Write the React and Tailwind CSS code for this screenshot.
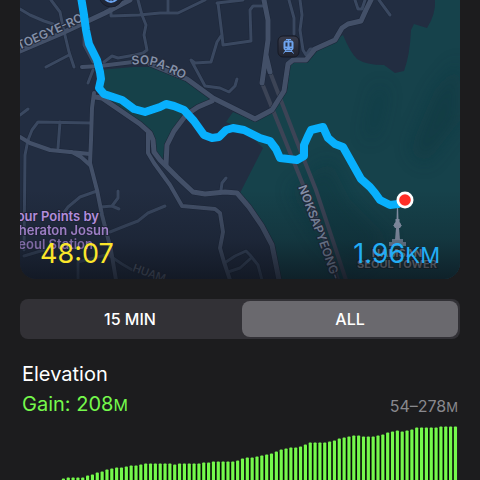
import React, { useState } from "react";

const roads = [
  { w: 3, d: "M20 9 L30 15 L44 21 L53 24" },
  { w: 3, d: "M51 0 L60 12 L63 27 L69 52 L74 67 M46 67 L69 55" },
  { w: 3, d: "M111 8 L111 16 L139 15 L160 13 L178 13 L205 0 M168 0 L168 13" },
  { w: 3, d: "M138 0 L142 15 L146 25 L144 35 L147 50 L143 53 L135 55 L118 58 L112 56 L104 62" },
  { w: 3, d: "M218 3 L222 35 L223 45 L251 41 L250 10 L253 6 L264 6 M217 3 L243 0" },
  { w: 3, d: "M221 36 L217 42 L211 62 L195 63 L191 60 L205 86 L220 88 L229 92 L235 86 L237 79" },
  { w: 3, d: "M289 0 L294 18 L294 34 M300 0 L302 15 L300 30 L303 50 L306 55 L310 49 L316 49" },
  { w: 3, d: "M355 0 L358 9 L362 9 L365 0 M379 0 L390 15" },
  { w: 3, d: "M20 115 L28 109 M60 122 L58 148 M28 140 L25 155 L24 250" },
  { w: 3, d: "M91 123 L38 122 L32 130 L28 140" },
  { w: 4, d: "M20 137 L30 143 L50 150 L90 154 M72 152 L81 157 L90 165" },
  { w: 3, d: "M60 218 L68 207 L80 197 L97 191 M101 207 L112 206 L118 198 L118 191 M112 206 L119 209" },
  { w: 3, d: "M78 280 L78 262 L110 254 M24 256 L44 250 M110 232 L125 226 L138 221 L148 213 L165 206" },
  { w: 3, d: "M110 256 L122 264 L134 271" },
  { w: 3, d: "M221 190 L222 183 L226 178 M226 262 L235 256 L246 251 L250 255 L258 265 L262 280 M228 272 L240 268 L250 259" },
  { w: 4, d: "M94 93 L92 108 L91 140 L90 163 L97 190 L102 215 L111 250 L116 280" },
  { w: 3, d: "M84 25 L84 45 L93 62 M88 83 L93 70" },
  { w: 5, d: "M20 51 L60 34 L105 13 L122 4 L130 0" },
  { w: 4, d: "M82 67 L100 66 L133 62" },
  { w: 4, d: "M148 133 L148 153 L154 163 L170 185 L182 206 L215 209 L220 213 L223 232 L220 248 L224 262 L230 280" },
  { w: 5, d: "M95 97 L102 98 L140 124 L150 133 L153 140 L154 152 L160 160 L177 177 L193 192 L205 194 L225 192 L237 193 L249 207 L262 226 L272 245 L279 280" },
  { w: 5, d: "M212 101 L198 107 L186 115 L174 131 L167 145 L166 165" },
  { w: 5, d: "M264 0 L268 20 L268 40 L262 83 M266 55 L270 72" },
  { w: 5, d: "M150 64 L187 79 L213 98 L255 119 L272 110 L284 91 L288 64 L293 60 L306 60 L315 49 L335 40 L342 28 L348 24 L361 21 L366 10 L371 0" },
];

const route =
  "M81 -3 L84 15 L86 30 L89 44 L97 60 L100 72 L101 79 L99 88 L104 94 L122 100 L134 109 L145 112 L160 107 L166 104 L174 106 L184 110 L194 121 L204 135 L212 138 L219 137 L226 130 L233 128 L244 130 L260 138 L270 141 L276 149 L280 158 L297 160 L304 156 L304 145 L308 136 L311 130 L323 127 L328 138 L335 144 L343 147 L352 163 L361 179 L370 187 L375 193 L380 200 L390 205 L398 204 L405 201";

// top of every elevation bar, in page units
const tops = [
  479, 478, 478, 478, 478, 476, 475, 473, 472, 470, 469, 468, 468, 467, 466, 466,
  465, 464, 464, 464, 464, 464, 464, 465, 464, 464, 464, 464, 464, 463, 463, 462,
  462, 462, 462, 462, 461, 459, 458, 458, 457, 456, 455, 454, 452, 450, 449, 448,
  448, 447, 445, 443, 443, 443, 443, 442, 441, 439, 438, 437, 436, 436, 437, 437,
  437, 436, 435, 433, 432, 431, 432, 431, 430, 428, 428, 428, 428, 428, 427, 427,
  427, 427,
];

function RouteMap() {
  return (
    <svg
      viewBox="20 0 440 279"
      className="block w-full"
      role="img"
      aria-label="Route map"
      fontFamily="Inter, sans-serif"
    >
      <defs>
        <linearGradient id="fade" x1="0" y1="0" x2="0" y2="1">
          <stop offset="0" stopColor="#0b0f17" stopOpacity="0" />
          <stop offset="0.55" stopColor="#0b0f17" stopOpacity="0.22" />
          <stop offset="1" stopColor="#0b0f17" stopOpacity="0.65" />
        </linearGradient>
        <linearGradient id="badge" x1="0" y1="0" x2="0" y2="1">
          <stop offset="0" stopColor="#383c4c" />
          <stop offset="1" stopColor="#20232f" />
        </linearGradient>
        <filter id="soft" x="-50%" y="-50%" width="200%" height="200%">
          <feGaussianBlur stdDeviation="9" />
        </filter>
        <path id="toegye" d="M19 50 L64 30 L94 16" />
        <path id="sopa" d="M132 65 Q150 62 162 69 L196 85" />
        <path id="noksa" d="M298 187 L316 234 Q324 256 336 292" />
        <path id="huam" d="M132 271 L168 284" />
      </defs>

      <rect x="20" width="440" height="279" fill="#222d41" />

      {/* parks */}
      <path
        fill="#164149"
        d="M99 70 L133 67 L152 67 L187 82 L210 99 L196 106 L184 114 L172 130 L165 148 L163 160 L155 150 L152 133 L134 118 L99 92Z"
      />
      <path
        fill="#16424b"
        d="M233 112 L255 121 L273 111 L287 91 L290 63 L306 62 L318 49 L343 35 Q350 52 357 59 Q366 65 384 65 L395 73 L404 71 Q410 55 411 30 L414 24 L427 28 Q436 14 435 0 L460 0 L460 279 L279 279 L272 245 L262 226 L240 193 L263 148 L245 130 L226 122Z"
      />
      <g fill="#10343d" filter="url(#soft)" opacity="0.4">
        <path d="M460 60 L435 90 L420 125 L410 150 L425 165 L460 120Z" />
        <path d="M378 85 L372 110 L366 140 L376 135 L386 90Z" />
        <path d="M290 190 L330 160 L350 200 L390 240 L350 270 L320 240Z" />
      </g>

      {/* tunnel */}
      <g fill="none" stroke="#3c4456" strokeWidth="4">
        <path d="M262 83 L287 145 L310 202 L325 240 L338 280" />
        <path d="M270 72 L297 142 L316 190 L346 280" />
      </g>

      <g fill="none" strokeLinecap="round" strokeLinejoin="round">
        {roads.map((r) => (
          <path key={r.d} d={r.d} stroke="#1d2739" strokeWidth={r.w + 1} />
        ))}
        {roads.map((r) => (
          <path
            key={r.d}
            d={r.d}
            stroke={r.w > 3 ? "#435068" : "#3a4860"}
            strokeWidth={r.w}
          />
        ))}
      </g>

      {/* street names */}
      <g
        fill="#8490a8"
        stroke="#222b3c"
        strokeWidth="2"
        paintOrder="stroke"
        fontWeight="600"
        fontSize="12"
      >
        <text>
          <textPath href="#toegye">TOEGYE-RO</textPath>
        </text>
        <text>
          <textPath href="#sopa">SOPA-RO</textPath>
        </text>
        <text>
          <textPath href="#noksa">NOKSAPYEONG-</textPath>
        </text>
        <text fontSize="11" fill="#5d6679" fontWeight="500">
          <textPath href="#huam">HUAM</textPath>
        </text>
      </g>

      {/* stations */}
      <circle cx="111" cy="-5" r="12" fill="#1f2637" stroke="#171d2b" />
      <path d="M104 -2 Q111 6 118 -2" fill="none" stroke="#6ba4f0" strokeWidth="2" />
      <path d="M107 0 V-4 M111 1 V-4 M115 0 V-4" stroke="#6ba4f0" strokeWidth="1" />
      <rect x="278" y="36" width="21" height="21" rx="5" fill="url(#badge)" stroke="#151924" />
      <g fill="none" stroke="#6fa5f0" strokeWidth="1">
        <path d="M286 39.500 H291 M288.500 39.500 V41" />
        <rect x="284" y="41" width="9" height="9" rx="1.500" fill="#6fa5f0" />
        <path d="M286 50 L283.500 53.500 M291 50 L293.500 53.500 M285 51.500 H292" />
        <path d="M286.500 42.500 V46.500 M290.500 42.500 V46.500" stroke="#29334b" strokeWidth="2" />
        <path d="M285.500 48.500 H286.500 M290.500 48.500 H291.500" stroke="#29334b" />
      </g>

      {/* seoul tower */}
      <g fill="#8f9bb1">
        <path d="M397 205 L396.500 220 H398.500 L398 205Z" />
        <path d="M395.500 219 H399.500 V222 L401 224 V226 H394 V224 L395.500 222Z" />
        <path d="M393 225 H402 L400 228 H395Z" />
        <path d="M396 228 H399 L400 240 H395Z" />
        <path d="M392 239 H403 V242 H406 V246 H389 V242 H392Z" opacity="0.8" />
      </g>
      <g
        fill="#8a8f98"
        stroke="#1a2d36"
        strokeWidth="2"
        paintOrder="stroke"
        fontSize="11"
        fontWeight="700"
        textAnchor="middle"
      >
        <text x="397" y="257">NAMSAN</text>
        <text x="397" y="268">SEOUL TOWER</text>
      </g>

      <rect x="20" y="190" width="440" height="89" fill="url(#fade)" />

      <g
        fill="#b28ddb"
        stroke="#1c2233"
        strokeWidth="2"
        paintOrder="stroke"
        fontSize="13"
        fontWeight="600"
      >
        <text x="99" y="221" textAnchor="end">Four Points by</text>
        <text x="109" y="235" textAnchor="end" opacity="0.85">Sheraton Josun</text>
        <text x="93" y="249" textAnchor="end" opacity="0.65">Seoul Station</text>
      </g>

      <path
        d={route}
        fill="none"
        stroke="#08b0fd"
        strokeWidth="8"
        strokeLinecap="round"
        strokeLinejoin="round"
      />
      <circle cx="405" cy="200" r="8.500" fill="#fff" />
      <circle cx="405" cy="200" r="5.800" fill="#ff2d26" />
    </svg>
  );
}

function ElevationChart() {
  const step = 4.84;
  return (
    <svg
      viewBox="20 419 440 61"
      className="block w-full"
      role="img"
      aria-label="Elevation chart"
    >
      <path
        fill="#070d08"
        d={
          tops
            .map((t, i) => `${i ? "L" : "M"}${63.4 + i * step} ${t + 1}`)
            .join(" ") + " L455 480 L63 480Z"
        }
      />
      {tops.map((t, i) => (
        <rect
          key={i}
          x={61.8 + i * step}
          y={t - 0.5}
          width="3.2"
          height={482 - t}
          rx="1"
          fill="#75f94c"
        />
      ))}
    </svg>
  );
}

export default function App() {
  const [range, setRange] = useState("ALL");

  return (
    <main className="min-h-screen bg-[#1c1c1e] px-5 font-[Inter,sans-serif] text-white">
      <section className="relative overflow-hidden rounded-b-2xl">
        <RouteMap />
        <div className="absolute inset-x-5 bottom-2 flex items-baseline justify-between text-[27px] leading-8">
          <span className="text-[#fbe62b]">48:07</span>
          <span className="text-[#22adf6]">
            1.96<span className="text-[22px]">KM</span>
          </span>
        </div>
      </section>

      <div className="mt-5 grid h-10 grid-cols-2 gap-1 rounded-lg bg-[#323136] p-0.5">
        {["15 MIN", "ALL"].map((label) => (
          <button
            key={label}
            type="button"
            aria-pressed={range === label}
            onClick={() => setRange(label)}
            className={
              range === label
                ? "rounded-lg bg-[#6a696e] font-medium"
                : "rounded-lg font-medium"
            }
          >
            {label}
          </button>
        ))}
      </div>

      <section className="mt-5">
        <header className="flex items-end justify-between px-0.5">
          <div>
            <h2 className="text-xl leading-[30px]">Elevation</h2>
            <p className="text-xl leading-[30px] text-[#75f94c]">
              Gain: 208<span className="text-base">M</span>
            </p>
          </div>
          <p className="text-base leading-6 text-[#89898e]">
            54–278<span className="text-[13px]">M</span>
          </p>
        </header>
        <ElevationChart />
      </section>
    </main>
  );
}
